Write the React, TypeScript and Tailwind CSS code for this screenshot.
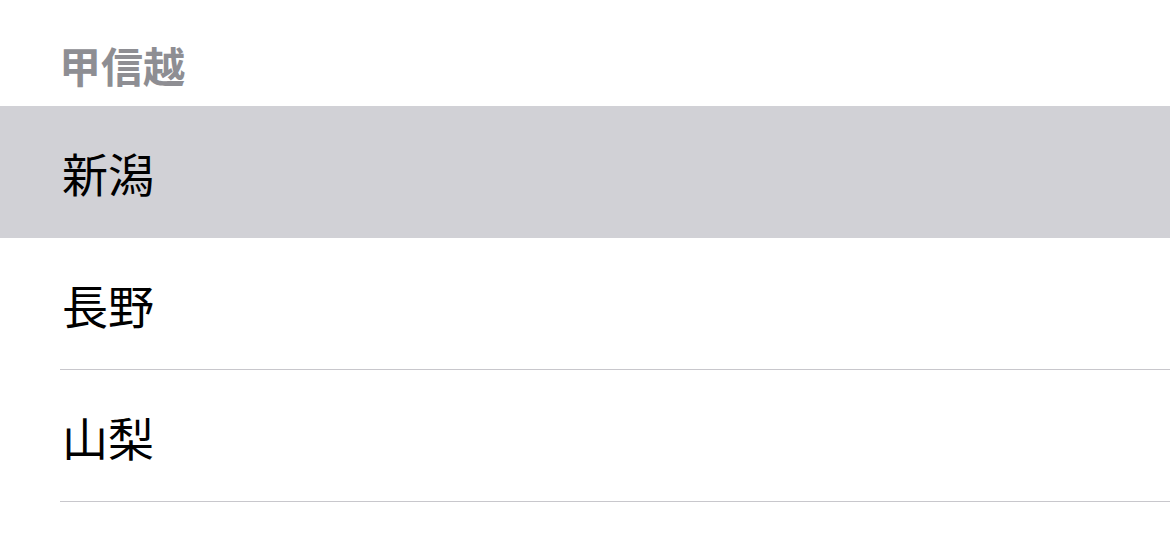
const ROWS = [
  { name: "新潟", selected: true },
  { name: "長野", selected: false },
  { name: "山梨", selected: false },
];

export default function App() {
  return (
    <div
      className="h-[540px] w-[1170px] overflow-hidden bg-white"
      style={{ fontFamily: '"Noto Sans CJK JP", "Noto Sans", sans-serif' }}
    >
      <div className="h-[106px] pl-[59px] pt-[44px]">
        <h2 className="text-[42px] font-bold leading-none text-[#8e8e93]">甲信越</h2>
      </div>
      <ul>
        {ROWS.map((r) => (
          <li key={r.name} className={r.selected ? "bg-[#d1d1d6]" : "bg-white"}>
            <div className="flex h-[131px] items-center pl-[62px]">
              <span className="text-[46px] leading-none text-black">{r.name}</span>
            </div>
            <div className={`ml-[60px] h-px ${r.selected ? "bg-transparent" : "bg-[#c8c7cc]"}`} />
          </li>
        ))}
      </ul>
    </div>
  );
}
